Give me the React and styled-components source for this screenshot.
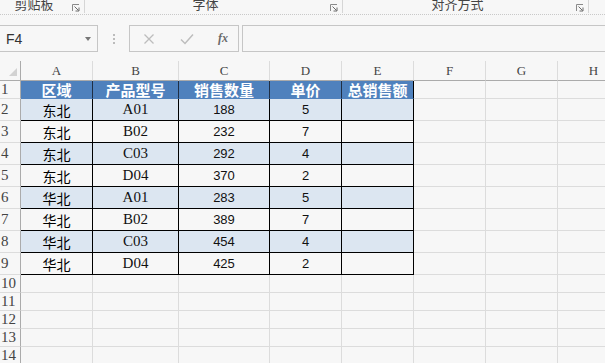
import React from "react";
import styled, { createGlobalStyle } from "styled-components";

const GlobalStyle = createGlobalStyle`
  html, body {
    margin: 0;
    padding: 0;
    background: #f7f7f7;
    overflow: hidden;
  }
  * {
    box-sizing: border-box;
  }
`;

const CJK = `"Noto Sans CJK SC", "Noto Sans", sans-serif`;

const groups = [
  { label: "剪贴板", width: 85 },
  { label: "字体", width: 258 },
  { label: "对齐方式", width: 246 },
];

const columns = [
  { name: "", width: 21 },
  { name: "A", width: 72 },
  { name: "B", width: 86 },
  { name: "C", width: 91 },
  { name: "D", width: 72 },
  { name: "E", width: 72 },
  { name: "F", width: 72 },
  { name: "G", width: 72 },
  { name: "H", width: 72 },
];

const heads = ["区域", "产品型号", "销售数量", "单价", "总销售额"];

const rows = [
  ["东北", "A01", "188", "5"],
  ["东北", "B02", "232", "7"],
  ["东北", "C03", "292", "4"],
  ["东北", "D04", "370", "2"],
  ["华北", "A01", "283", "5"],
  ["华北", "B02", "389", "7"],
  ["华北", "C03", "454", "4"],
  ["华北", "D04", "425", "2"],
];

const fontFor = ["cjk", "code", "num", "num", "num"];

function Launcher() {
  return (
    <LauncherIcon width="8" height="8" viewBox="0 0 8 8">
      <path d="M0.5 7V0.5H7" fill="none" stroke="#8a8a8a" strokeWidth="1" />
      <path d="M2.5 2.5L6.5 6.5" fill="none" stroke="#6a6a6a" strokeWidth="1" />
      <path d="M7 3.5V7H3.5" fill="none" stroke="#6a6a6a" strokeWidth="1" />
    </LauncherIcon>
  );
}

export default function App() {
  const template = columns.map((c) => c.width + "px").join(" ");
  const blanks = [10, 11, 12, 13, 14];

  return (
    <Page>
      <GlobalStyle />

      <Ribbon>
        {groups.map((g) => (
          <Group key={g.label} $width={g.width}>
            <GroupLabel>{g.label}</GroupLabel>
            <Launcher />
          </Group>
        ))}
      </Ribbon>

      <FormulaBar>
        <NameBox>
          <span>F4</span>
          <Caret />
        </NameBox>
        <Grip>
          <i />
          <i />
          <i />
        </Grip>
        <FuncBox>
          <svg width="12" height="12" viewBox="0 0 12 12">
            <path d="M1.5 1.5L10.5 10.5M10.5 1.5L1.5 10.5" stroke="#bdbdbd" strokeWidth="1.3" />
          </svg>
          <svg width="14" height="12" viewBox="0 0 14 12">
            <path d="M1 6.5L5 10.5L13 1.5" fill="none" stroke="#bdbdbd" strokeWidth="1.5" />
          </svg>
          <Fx>fx</Fx>
        </FuncBox>
        <FormulaInput />
      </FormulaBar>

      <Sheet $template={template}>
        <Corner>
          <svg width="8" height="8" viewBox="0 0 8 8">
            <path d="M8 0V8H0Z" fill="#d2d2d2" />
          </svg>
        </Corner>
        {columns.slice(1).map((c) => (
          <ColHead key={c.name}>{c.name}</ColHead>
        ))}

        <RowHead>1</RowHead>
        {heads.map((h, i) => (
          <HeadCell key={h} $last={i === heads.length - 1}>
            {h}
          </HeadCell>
        ))}
        <Blank />
        <Blank />
        <Blank />

        {rows.map((r, ri) => (
          <React.Fragment key={ri}>
            <RowHead>{ri + 2}</RowHead>
            {[...r, ""].map((v, ci) => (
              <DataCell key={ci} $band={ri % 2 === 0} $font={fontFor[ci]}>
                {v}
              </DataCell>
            ))}
            <Blank />
            <Blank />
            <Blank />
          </React.Fragment>
        ))}

        {blanks.map((n) => (
          <React.Fragment key={n}>
            <RowHead>{n}</RowHead>
            {columns.slice(1).map((c) => (
              <Blank key={c.name} />
            ))}
          </React.Fragment>
        ))}
      </Sheet>
    </Page>
  );
}

const Page = styled.div`
  width: 605px;
  height: 363px;
  overflow: hidden;
  background: #f7f7f7;
`;

const Ribbon = styled.div`
  display: flex;
  height: 15px;
  border-bottom: 1px dotted #c9c9c9;
  overflow: hidden;
`;

const Group = styled.div`
  flex: 0 0 ${(p) => p.$width}px;
  display: flex;
  align-items: flex-start;
  border-right: 1px solid #d6d6d6;
  height: 13px;
`;

const GroupLabel = styled.div`
  flex: 1;
  text-align: center;
  font-family: ${CJK};
  font-size: 13px;
  line-height: 16px;
  margin-top: -4px;
  color: #444;
`;

const LauncherIcon = styled.svg`
  margin: 4px 4px 0 4px;
  flex: none;
`;

const FormulaBar = styled.div`
  display: flex;
  height: 27px;
  margin-top: 10px;
`;

const NameBox = styled.div`
  width: 99px;
  margin-left: -1px;
  border: 1px solid #c6c6c6;
  display: flex;
  align-items: center;
  justify-content: space-between;
  padding: 0 6px 0 6px;
  font-family: "Liberation Sans", Arial, sans-serif;
  font-size: 14px;
  color: #333;
`;

const Caret = styled.span`
  width: 0;
  height: 0;
  border-left: 3.5px solid transparent;
  border-right: 3.5px solid transparent;
  border-top: 4px solid #777;
`;

const Grip = styled.div`
  width: 31px;
  display: flex;
  flex-direction: column;
  align-items: center;
  justify-content: center;
  gap: 2px;

  i {
    width: 2px;
    height: 2px;
    background: #bcbcbc;
  }
`;

const FuncBox = styled.div`
  width: 110px;
  border: 1px solid #c6c6c6;
  display: flex;
  align-items: center;
  justify-content: space-between;
  padding: 0 10px 0 13px;
`;

const Fx = styled.span`
  font-family: "Liberation Serif", "Times New Roman", serif;
  font-style: italic;
  font-weight: bold;
  font-size: 12px;
  color: #6a6a6a;
`;

const FormulaInput = styled.div`
  flex: 1;
  margin-left: 3px;
  margin-right: -2px;
  border: 1px solid #c6c6c6;
`;

const Sheet = styled.div`
  display: grid;
  grid-template-columns: ${(p) => p.$template};
  grid-template-rows: 20px 18px repeat(8, 22px) repeat(5, 18px);
  margin-top: 9px;
  width: 630px;
`;

const Corner = styled.div`
  display: flex;
  align-items: flex-end;
  justify-content: flex-end;
  padding: 0 3px 4px 0;
  border-right: 1px solid #ababab;
  border-bottom: 1px solid #ababab;
`;

const ColHead = styled.div`
  display: flex;
  align-items: center;
  justify-content: center;
  border-right: 1px solid #dcdcdc;
  border-bottom: 1px solid #ababab;
  font-family: "Liberation Serif", "Times New Roman", serif;
  font-size: 13px;
  color: #444;
  padding-top: 1px;
`;

const RowHead = styled.div`
  display: flex;
  align-items: center;
  padding-left: 1px;
  border-right: 1px solid #ababab;
  border-bottom: 1px solid #dcdcdc;
  font-family: "Liberation Serif", "Times New Roman", serif;
  font-size: 15px;
  color: #444;
`;

const Blank = styled.div`
  border-right: 1px solid #dcdcdc;
  border-bottom: 1px solid #dcdcdc;
`;

const HeadCell = styled.div`
  display: flex;
  align-items: center;
  justify-content: center;
  background: #4f81bd;
  border-right: 1px solid ${(p) => (p.$last ? "#000" : "#1f2f45")};
  border-bottom: 1px solid #4f81bd;
  font-family: ${CJK};
  font-weight: bold;
  font-size: 15px;
  color: #fff;
  white-space: nowrap;
  overflow: hidden;
`;

const fonts = {
  cjk: `font-family: ${CJK}; font-size: 14px; color: #000;`,
  code: `font-family: "Liberation Serif", "Times New Roman", serif; font-size: 15px;`,
  num: `font-family: "Liberation Sans", Arial, sans-serif; font-size: 13px;`,
};

const DataCell = styled.div`
  display: flex;
  align-items: center;
  justify-content: center;
  background: ${(p) => (p.$band ? "#dce6f1" : "#f7f7f7")};
  border-right: 1px solid #000;
  border-bottom: 1px solid #000;
  color: #111;
  ${(p) => fonts[p.$font]}
`;
